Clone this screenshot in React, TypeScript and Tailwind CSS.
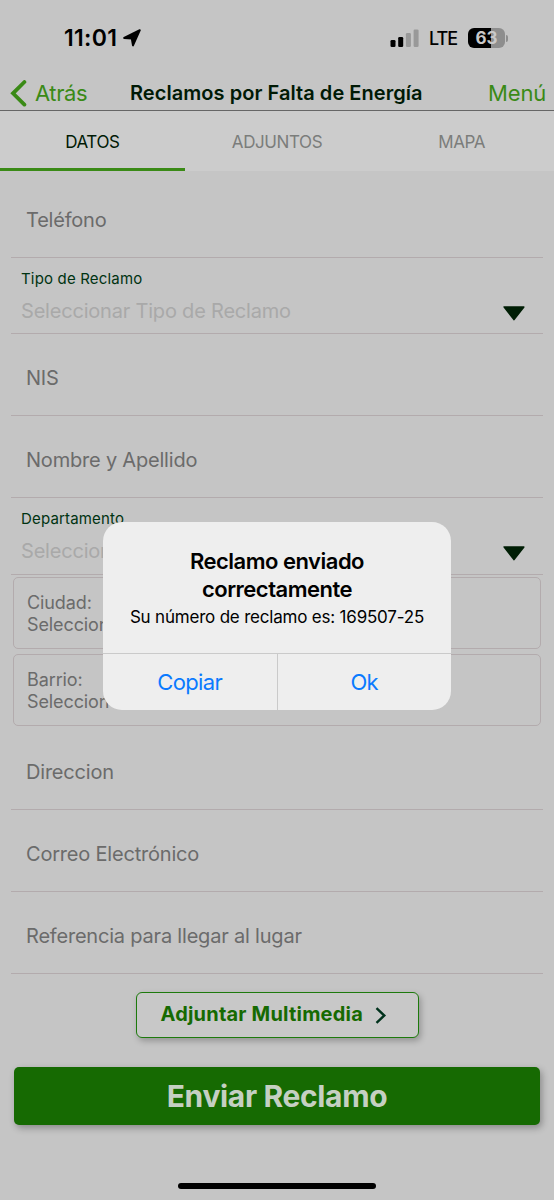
import React from 'react';

interface FieldProps {
  label: string;
  className?: string;
}

function Field({ label, className = 'h-[82px]' }: FieldProps) {
  return (
    <div className={`mx-[11px] flex items-end border-b border-[#b3abad] pb-[24px] pl-[15px] ${className}`}>
      <span className="text-[20px] leading-[26px] tracking-[-0.2px] text-[#6b6b6b]">{label}</span>
    </div>
  );
}

interface SelectFieldProps {
  label: string;
  placeholder: string;
  className: string;
}

function SelectField({ label, placeholder, className }: SelectFieldProps) {
  return (
    <div className={`mx-[11px] flex justify-between border-b border-[#b3abad] pl-[10px] pr-[18px] ${className}`}>
      <div className="flex flex-col pt-[11px]">
        <span className="text-[15px] leading-[20px] tracking-[0.17px] text-[#003312]">{label}</span>
        <span className="mt-[9px] text-[20px] leading-[26px] tracking-[-0.2px] text-[#a9a9a9]">{placeholder}</span>
      </div>
      <svg className="mt-[48px] h-[15px] w-[22px]" viewBox="0 0 22 15">
        <path d="M1.2 1h19.6L11 13.6z" fill="#001e05" stroke="#001e05" strokeWidth="1.6" strokeLinejoin="round" />
      </svg>
    </div>
  );
}

function PickerCard({ label, value }: { label: string; value: string }) {
  return (
    <div className="mx-[13px] flex h-[72px] flex-col justify-center rounded-[5px] border border-[#b3abad] pl-[13px] pt-[2px] text-[18px] leading-[22px] tracking-[-0.1px] text-[#6b6b6b]">
      <span>{label}</span>
      <span>{value}</span>
    </div>
  );
}

function StatusBar() {
  return (
    <div className="flex h-[76px] items-center pl-[64px] text-black">
      <span className="w-[55px] whitespace-nowrap text-[23px] font-semibold leading-[26px] tracking-[0.3px]">11:01</span>
      <svg className="ml-[4px] h-[18px] w-[18px]" viewBox="0 0 18 18">
        <path
          d="M16.8 1.2 10 16.4 8.8 9.6 1.2 9z"
          stroke="#000"
          strokeWidth="2"
          strokeLinejoin="round"
        />
      </svg>
      <svg className="ml-[249px] h-[18px] w-[29px]" viewBox="0 0 29 18">
        <rect x="0.5" y="11" width="5" height="7" rx="1.3" />
        <rect x="8.2" y="8" width="5" height="10" rx="1.3" />
        <rect x="15.9" y="4" width="5" height="14" rx="1.3" fill="#999" />
        <rect x="23.6" y="0.5" width="5" height="17.5" rx="1.3" fill="#999" />
      </svg>
      <span className="ml-[10px] w-[28px] whitespace-nowrap pt-[1px] text-[18px] font-medium leading-[24px] tracking-[-1px]">LTE</span>
      <div className="ml-[11px] flex h-[20px] w-[37px] items-center justify-center rounded-[6px] bg-[linear-gradient(90deg,#000_63%,#8e8e8e_63%)]">
        <span className="text-[17px] font-bold leading-[20px] text-[#c9c9c9]">63</span>
      </div>
      <div className="ml-[1px] h-[7px] w-[2px] rounded-r-full bg-[#8e8e8e]" />
    </div>
  );
}

function Alert() {
  return (
    <div className="absolute left-[103px] top-[522px] flex h-[188px] w-[348px] flex-col overflow-hidden rounded-[19px] bg-[#eee] text-center">
      <div className="h-[131px] pt-[25px] text-black">
        <h2 className="text-[22px] font-semibold leading-[28px] tracking-[-0.5px]">
          Reclamo enviado
          <br />
          correctamente
        </h2>
        <p className="mt-[3px] text-[17px] leading-[22px] tracking-[-0.2px]">Su número de reclamo es: 169507-25</p>
      </div>
      <div className="flex flex-1 border-t border-[#cacaca] text-[22px] tracking-[-0.6px] text-[#0a7aff]">
        <button className="flex-1 border-r border-[#cacaca]">Copiar</button>
        <button className="flex-1">Ok</button>
      </div>
    </div>
  );
}

export default function App() {
  return (
    <div className="relative h-[1200px] w-[554px] overflow-hidden bg-[#c5c5c5] font-['Inter',sans-serif]">
      <StatusBar />

      <header className="flex h-[35px] items-center border-b border-[#666] pl-[10px] pr-[8px]">
        <svg className="h-[27px] w-[17px]" viewBox="0 0 17 27" fill="none" stroke="#3a8a16" strokeWidth="3.8" strokeLinecap="round" strokeLinejoin="miter">
          <path d="M14.4 2 3 13.3 14.4 24.6" />
        </svg>
        <span className="ml-[8px] w-[95px] text-[22px] leading-[28px] tracking-[-0.4px] text-[#3a8a16]">Atrás</span>
        <h1 className="whitespace-nowrap text-[20px] font-semibold leading-[28px] tracking-[0.05px] text-[#001a05]">Reclamos por Falta de Energía</h1>
        <span className="ml-auto text-[22px] leading-[28px] tracking-[-0.2px] text-[#3a8a16]">Menú</span>
      </header>

      <nav className="grid h-[60px] grid-cols-3 bg-[#ccc] text-center text-[17px] tracking-[-0.4px] text-[#7b7d7b]">
        <span className="flex items-center justify-center border-b-[3px] border-[#3a8a16] pt-[6px] text-[#001a05]">DATOS</span>
        <span className="flex items-center justify-center border-b-[3px] border-transparent pt-[6px]">ADJUNTOS</span>
        <span className="flex items-center justify-center border-b-[3px] border-transparent pt-[6px]">MAPA</span>
      </nav>

      <main>
        <Field label="Teléfono" className="h-[87px]" />
        <SelectField label="Tipo de Reclamo" placeholder="Seleccionar Tipo de Reclamo" className="h-[76px]" />
        <Field label="NIS" />
        <Field label="Nombre y Apellido" />
        <SelectField label="Departamento" placeholder="Seleccionar" className="h-[77px]" />
        <div className="mt-[2px] flex flex-col gap-[5px]">
          <PickerCard label="Ciudad:" value="Seleccion" />
          <PickerCard label="Barrio:" value="Seleccion" />
        </div>
        <Field label="Direccion" className="h-[84px]" />
        <Field label="Correo Electrónico" />
        <Field label="Referencia para llegar al lugar" />

        <button className="mx-auto mt-[18px] flex h-[46px] w-[283px] items-center rounded-[6px] border border-[#1d7a0c] bg-[#c8c8c8] pb-[2px] pl-[24px] shadow-[2px_3px_6px_rgba(0,0,0,0.25)]">
          <span className="w-[203px] whitespace-nowrap text-left text-[20px] font-bold leading-[26px] tracking-[0.2px] text-[#166a02]">Adjuntar Multimedia</span>
          <svg className="ml-[11px] mt-[2px] h-[17px] w-[12px]" viewBox="0 0 12 17" fill="none" stroke="#00321c" strokeWidth="2.4">
            <path d="m1.5 1.2 7.8 7.3-7.8 7.3" />
          </svg>
        </button>

        <button className="mx-[14px] mt-[29px] flex h-[58px] w-[526px] items-center justify-center rounded-[5px] bg-[#166a02] text-[30px] font-bold tracking-[-0.35px] text-[#c5d0c2] shadow-[2px_3px_7px_rgba(0,0,0,0.3)]">
          Enviar Reclamo
        </button>
      </main>

      <div className="mx-auto mt-[58px] h-[6px] w-[198px] rounded-full bg-black" />

      <Alert />
    </div>
  );
}
